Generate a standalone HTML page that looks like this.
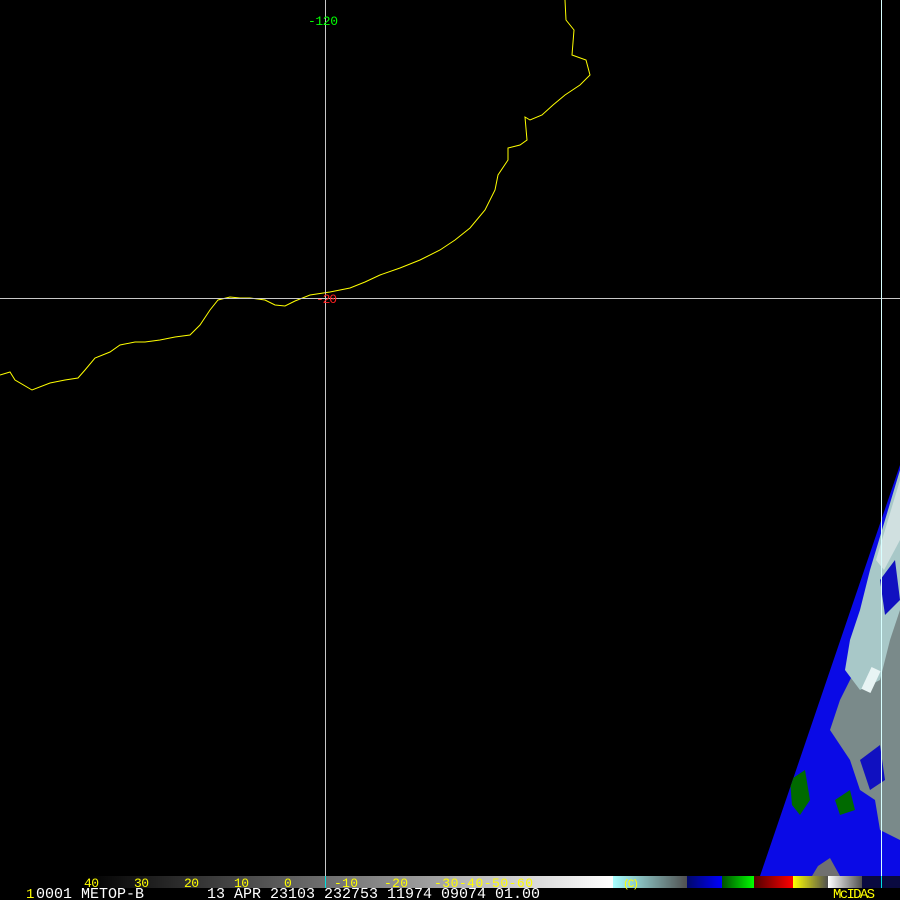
<!DOCTYPE html>
<html><head><style>
html,body{margin:0;padding:0;background:#000;width:900px;height:900px;overflow:hidden}
svg{display:block}
text{font-family:"Liberation Mono",monospace}
</style></head><body>
<svg width="900" height="900" viewBox="0 0 900 900" xmlns="http://www.w3.org/2000/svg">
<defs>
<linearGradient id="g1" x1="0" x2="1"><stop offset="0" stop-color="#000"/><stop offset="1" stop-color="#a8a8a8"/></linearGradient>
<linearGradient id="g2" x1="0" x2="1"><stop offset="0" stop-color="#b0b0b0"/><stop offset="1" stop-color="#fff"/></linearGradient>
<linearGradient id="g3" x1="0" x2="1"><stop offset="0" stop-color="#a8ffff"/><stop offset="1" stop-color="#505050"/></linearGradient>
<linearGradient id="g4" x1="0" x2="1"><stop offset="0" stop-color="#00086a"/><stop offset="1" stop-color="#0000ff"/></linearGradient>
<linearGradient id="g5" x1="0" x2="1"><stop offset="0" stop-color="#005000"/><stop offset="1" stop-color="#00ff00"/></linearGradient>
<linearGradient id="g6" x1="0" x2="1"><stop offset="0" stop-color="#500000"/><stop offset="1" stop-color="#ff0000"/></linearGradient>
<linearGradient id="g7" x1="0" x2="1"><stop offset="0" stop-color="#ffff00"/><stop offset="1" stop-color="#505050"/></linearGradient>
<linearGradient id="g8" x1="0" x2="1"><stop offset="0" stop-color="#fff"/><stop offset="1" stop-color="#505050"/></linearGradient>
<clipPath id="sw"><polygon points="900,465 900,876 760,876"/></clipPath>
</defs>
<g clip-path="url(#sw)">
<rect x="740" y="460" width="160" height="420" fill="#0a0ae6"/>
<path d="M900,465 L900,560 885,600 870,640 855,670 840,700 830,730 850,760 860,790 875,800 880,830 900,840 Z" fill="#7a8a8a"/>
<path d="M900,470 L885,520 870,570 860,610 850,640 845,670 860,690 880,680 890,640 900,610 Z" fill="#a8c8c8"/>
<path d="M900,480 L888,520 876,560 884,570 900,540Z" fill="#d0e0e0"/>
<rect x="866" y="668" width="10" height="24" fill="#e8f4f4" transform="rotate(25 871 680)"/>
<path d="M880,580 L895,560 900,600 885,615Z" fill="#1010c0"/>
<path d="M860,760 L880,745 885,780 870,790Z" fill="#1010c0"/>
<path d="M790,780 L805,770 810,800 800,815 792,805Z" fill="#006a00"/>
<path d="M835,800 L850,790 855,810 840,815Z" fill="#006a00"/>
<path d="M818,866 L830,858 840,876 812,876Z" fill="#707070"/>
</g>
<polyline fill="none" stroke="#ffff00" stroke-width="1" points="565,0 566,20 574,30 572,55 586,60 590,75 580,85 565,95 553,105 542,115 530,120 525,117 527,140 520,145 508,148 508,160 498,175 495,190 485,210 470,228 455,240 440,250 420,260 400,268 380,275 365,282 350,288 330,292 310,295 295,301 285,306 275,305 265,300 250,298 240,298 230,297 218,300 210,310 200,325 190,335 175,337 160,340 145,342 135,342 120,345 110,352 95,358 85,370 78,378 65,380 50,383 32,390 15,380 10,372 0,375"/>
<line x1="325.5" y1="0" x2="325.5" y2="876" stroke="#c8c8c8"/>
<line x1="0" y1="298.5" x2="900" y2="298.5" stroke="#c8c8c8"/>
<line x1="881.5" y1="0" x2="881.5" y2="876" stroke="#d8ffff"/>
<text x="308" y="25" fill="#00ff00" font-size="13" textLength="30">-120</text>
<text x="316" y="303" fill="#ff2020" font-size="13" textLength="21">-20</text>
<rect x="0" y="876" width="900" height="24" fill="#000"/>
<rect x="85" y="876" width="365" height="12" fill="url(#g1)"/>
<rect x="450" y="876" width="163" height="12" fill="url(#g2)"/>
<rect x="613" y="876" width="74" height="12" fill="url(#g3)"/>
<rect x="687" y="876" width="35" height="12" fill="url(#g4)"/>
<rect x="722" y="876" width="32" height="12" fill="url(#g5)"/>
<rect x="754" y="876" width="39" height="12" fill="url(#g6)"/>
<rect x="793" y="876" width="35" height="12" fill="url(#g7)"/>
<rect x="828" y="876" width="34" height="12" fill="url(#g8)"/>
<rect x="862" y="876" width="38" height="12" fill="#0a0a40"/>
<line x1="325.5" y1="876" x2="325.5" y2="888" stroke="#00e0e0"/>
<line x1="881.5" y1="876" x2="881.5" y2="888" stroke="#00e0e0"/>
<g fill="#ffff00" font-size="13">
<text x="84" y="887" textLength="15">40</text><text x="134" y="887" textLength="15">30</text><text x="184" y="887" textLength="15">20</text><text x="234" y="887" textLength="15">10</text><text x="284" y="887">0</text>
<text x="334" y="887" textLength="24">-10</text><text x="384" y="887" textLength="24">-20</text><text x="434" y="887" textLength="99">-30-40-50-60</text>
<text x="623" y="887" font-size="11" textLength="16">(C)</text>
</g>
<text x="26" y="898" fill="#ffff00" font-size="14">1</text>
<text x="36" y="898" fill="#fff" font-size="15" xml:space="preserve" textLength="504">0001 METOP-B       13 APR 23103 232753 11974 09074 01.00</text>
<text x="833" y="898" fill="#ffff00" font-size="14" textLength="42">McIDAS</text>
</svg>
</body></html>
